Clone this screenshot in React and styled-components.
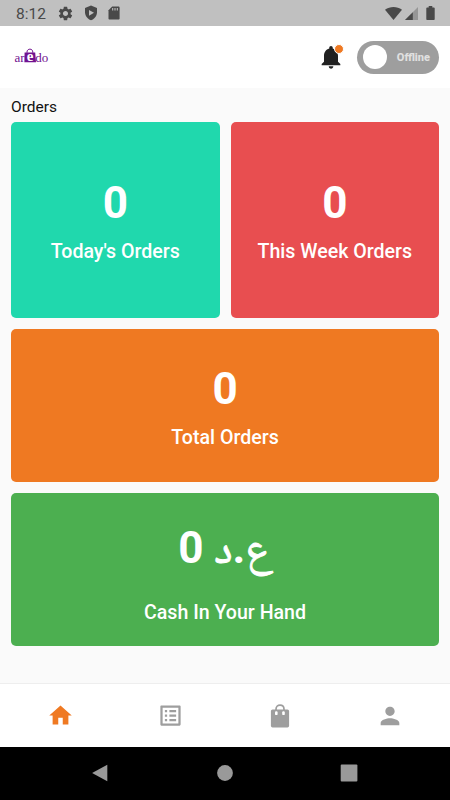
import React from 'react'
import styled, { createGlobalStyle } from 'styled-components';
import { MdHome, MdListAlt, MdPerson, MdNotifications, MdSettings } from 'react-icons/md';

const App = () => {
  return (
    <Screen>
        <GlobalStyle />
        <StatusBar>
            <StatusLeft>
                <Time>8:12</Time>
                <MdSettings size={17} />
                <ShieldIcon />
                <SdCardIcon />
            </StatusLeft>
            <StatusRight>
                <WifiIcon />
                <SignalIcon />
                <BatteryIcon />
            </StatusRight>
        </StatusBar>
        <Header>
            <Logo />
            <HeaderRight>
                <Bell>
                    <MdNotifications size={28} />
                    <BellDot />
                </Bell>
                <Toggle>
                    <Knob />
                    <span>Offline</span>
                </Toggle>
            </HeaderRight>
        </Header>
        <Main>
            <Title>Orders</Title>
            <Cards>
                <Card $color="#20d8ad">
                    <Count>0</Count>
                    <Label>Today's Orders</Label>
                </Card>
                <Card $color="#e84e50">
                    <Count>0</Count>
                    <Label>This Week Orders</Label>
                </Card>
                <Card $color="#ef7922" $wide>
                    <Count>0</Count>
                    <Label>Total Orders</Label>
                </Card>
                <Card $color="#4caf50" $wide>
                    <Count $tall>0 <Currency>ع<b>.</b>د</Currency></Count>
                    <Label>Cash In Your Hand</Label>
                </Card>
            </Cards>
        </Main>
        <TabBar>
            <Tab $active><MdHome size={27} /></Tab>
            <Tab><MdListAlt size={27} /></Tab>
            <Tab><BagIcon /></Tab>
            <Tab><MdPerson size={28} /></Tab>
        </TabBar>
        <SystemBar>
            <svg width="18" height="18" viewBox="0 0 18 18"><path d="M15.3 .7v16.6L.1 9z" /></svg>
            <svg width="18" height="18" viewBox="0 0 18 18"><circle cx="9" cy="9" r="7.9" /></svg>
            <svg width="18" height="18" viewBox="0 0 18 18"><rect x=".7" y=".6" width="16.7" height="16.8" rx="1" /></svg>
        </SystemBar>
    </Screen>
  )
}

export default App

const Logo = () => (
  <LogoSvg width="36" height="18" viewBox="0 0 36 18">
      <LogoText x="0.4" y="13.6">ar</LogoText>
      <LogoText x="21.2" y="14">do</LogoText>
      <path d="M10.6 4.4h10.6l.8 9.9H10.4z" />
      <path d="M13 4.8V4c0-3.8 5.8-3.8 5.8 0v.8" fill="none" stroke="#71128f" strokeWidth="1" />
      <LogoText x="12.7" y="12.7" $bold>e</LogoText>
  </LogoSvg>
)

const ShieldIcon = () => (
  <svg width="14" height="16" viewBox="0 0 14 16">
      <path d="M7 .6l6 2.5v4.2c0 3.6-2.4 6.6-6 8-3.6-1.4-6-4.4-6-8V3.1z" />
      <path d="M5 4.9v5.8L10 7.8z" fill="#c0c0c0" />
  </svg>
)

const SdCardIcon = () => (
  <svg width="12" height="14" viewBox="0 0 12 14">
      <path d="M4.2.5h6.2c.7 0 1.2.5 1.2 1.2v10.7c0 .7-.5 1.2-1.2 1.2H1.7c-.7 0-1.2-.5-1.2-1.2V4.2z" />
      <path d="M4.7 1.9v2.6M7 1.9v2.6M9.3 1.9v2.6" stroke="#c0c0c0" strokeWidth="1.1" />
  </svg>
)

const WifiIcon = () => (
  <svg width="17" height="13" viewBox="0 0 17 13">
      <path d="M0 2.7C5-.9 12-.9 17 2.7L8.5 13z" />
  </svg>
)

const SignalIcon = () => (
  <svg width="13" height="13" viewBox="0 0 13 13">
      <path d="M13 0v13H0z" opacity=".35" />
      <path d="M7.8 5.2V13H0z" />
  </svg>
)

const BatteryIcon = () => (
  <svg width="9" height="14" viewBox="0 0 9 14">
      <path d="M2.7 0h3.6v1.5h1.6c.5 0 .8.3.8.8v10.9c0 .5-.3.8-.8.8H1.1c-.5 0-.8-.3-.8-.8V2.3c0-.5.3-.8.8-.8h1.6z" />
  </svg>
)

const BagIcon = () => (
  <svg width="20" height="24" viewBox="0 0 20 24">
      <path d="M6 6.3v-1C6 -.2 14 -.2 14 5.3v1" fill="none" stroke="currentColor" strokeWidth="1.7" />
      <rect x=".9" y="5.4" width="18.2" height="18" rx="1.6" />
      <rect x="5" y="7.2" width="2.6" height="3.9" rx="1.2" fill="#fff" />
      <rect x="12.2" y="7.2" width="2.6" height="3.9" rx="1.2" fill="#fff" />
  </svg>
)

const GlobalStyle = createGlobalStyle`
    * {
        box-sizing: border-box;
    }

    body {
        margin: 0;
        font-family: Roboto, sans-serif;
    }

    svg {
        display: block;
        fill: currentColor;
        flex-shrink: 0;
    }
`

const Screen = styled.div`
    width: 450px;
    height: 800px;
    display: flex;
    flex-direction: column;
    overflow: hidden;
    background: #fafafa;
`

const StatusBar = styled.div`
    height: 26px;
    padding: 0 15px 0 16px;
    display: flex;
    align-items: center;
    justify-content: space-between;
    background: #c0c0c0;
    color: #494949;
`

const StatusLeft = styled.div`
    display: flex;
    align-items: center;
    gap: 10px;
`

const Time = styled.span`
    font-size: 15.5px;
    line-height: 18px;
    width: 31px;
    padding-top: 1px;
`

const StatusRight = styled.div`
    display: flex;
    align-items: center;
    gap: 3px;

    > svg:last-child {
        margin-left: 5px;
    }
`

const Header = styled.div`
    height: 62px;
    padding: 0 11px 0 14px;
    display: flex;
    align-items: center;
    justify-content: space-between;
    background: #fff;
`

const LogoSvg = styled.svg`
    color: #71128f;
`

const LogoText = styled.text`
    fill: ${props => props.$bold ? '#fff' : '#71128f'};
    font-family: "Liberation Serif", serif;
    font-size: ${props => props.$bold ? '15px' : '13px'};
    font-weight: ${props => props.$bold ? 700 : 400};
`

const HeaderRight = styled.div`
    display: flex;
    align-items: center;
    gap: 12px;
`

const Bell = styled.div`
    position: relative;
    color: #212121;
`

const BellDot = styled.div`
    position: absolute;
    top: 1px;
    right: 1px;
    width: 10px;
    height: 10px;
    border: 0.5px solid #fff;
    border-radius: 50%;
    background: #ef7922;
`

const Toggle = styled.div`
    width: 82px;
    height: 33px;
    padding: 0 9px 0 6px;
    display: flex;
    align-items: center;
    justify-content: space-between;
    border-radius: 17px;
    background: #9e9e9e;

    > span {
        font-size: 11px;
        font-weight: 800;
        color: #e0e0e0;
    }
`

const Knob = styled.div`
    width: 24px;
    height: 24px;
    border-radius: 50%;
    background: #fff;
`

const Main = styled.div`
    flex: 1;
    padding: 10px 11px 0;
`

const Title = styled.div`
    height: 24px;
    font-size: 15.5px;
    line-height: 19px;
    color: #111;
`

const Cards = styled.div`
    display: grid;
    grid-template-columns: repeat(2, 1fr);
    grid-template-rows: 196px 153px 153px;
    gap: 11px;
`

const Card = styled.div`
    grid-column: ${props => props.$wide ? 'span 2' : 'auto'};
    display: flex;
    flex-direction: column;
    align-items: center;
    justify-content: center;
    border-radius: 5px;
    background: ${props => props.$color};
    color: #fff;
`

const Count = styled.div`
    height: ${props => props.$tall ? '75px' : '52px'};
    padding-top: ${props => props.$tall ? '7px' : '0'};
    font-size: 44px;
    font-weight: 700;
    line-height: 52px;
    white-space: pre;
`

const Currency = styled.span`
    font-family: "Noto Naskh Arabic", "Noto Sans Arabic", "DejaVu Sans", sans-serif;
    font-weight: 400;
    -webkit-text-stroke: 0.9px #fff;

    > b {
        font-family: Roboto, sans-serif;
        font-weight: 700;
        -webkit-text-stroke: 0;
    }
`

const Label = styled.div`
    margin-top: 11px;
    font-size: 19.6px;
    font-weight: 500;
    line-height: 23px;
`

const TabBar = styled.div`
    height: 64px;
    padding: 0 5.5px;
    display: flex;
    border-top: 1px solid #eee;
    background: #fff;
`

const Tab = styled.div`
    flex: 1;
    display: flex;
    align-items: center;
    justify-content: center;
    color: ${props => props.$active ? '#ef7922' : '#9e9e9e'};
`

const SystemBar = styled.div`
    height: 53px;
    padding-bottom: 1px;
    display: flex;
    align-items: center;
    justify-content: center;
    gap: 106px;
    background: #000;
    color: #999;
`
